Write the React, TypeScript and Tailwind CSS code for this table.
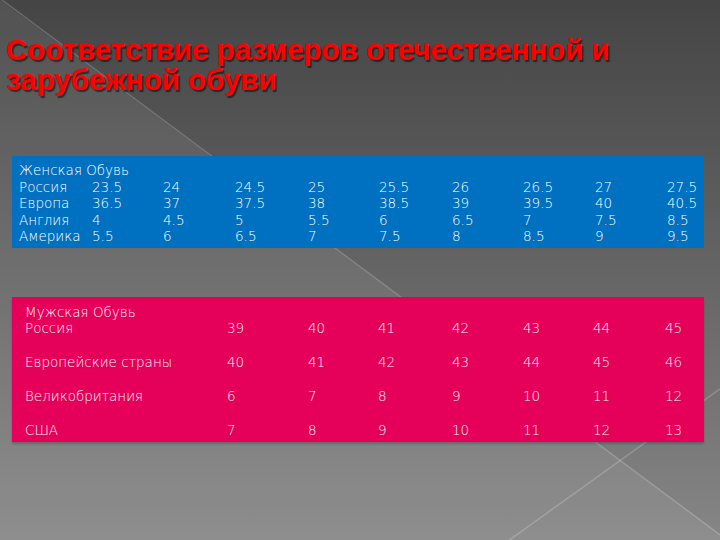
const WOMEN = [
  ['Россия', '23.5', '24', '24.5', '25', '25.5', '26', '26.5', '27', '27.5'],
  ['Европа', '36.5', '37', '37.5', '38', '38.5', '39', '39.5', '40', '40.5'],
  ['Англия', '4', '4.5', '5', '5.5', '6', '6.5', '7', '7.5', '8.5'],
  ['Америка', '5.5', '6', '6.5', '7', '7.5', '8', '8.5', '9', '9.5'],
];

const MEN = [
  ['Европейские страны', '40', '41', '42', '43', '44', '45', '46'],
  ['Великобритания', '6', '7', '8', '9', '10', '11', '12'],
  ['США', '7', '8', '9', '10', '11', '12', '13'],
];

const MEN_RUSSIA = ['39', '40', '41', '42', '43', '44', '45'];

function Backdrop() {
  return (
    <svg className="absolute inset-0" width="720" height="540" viewBox="0 0 720 540">
      <polygon points="0,0 727,540 0,540" fill="#ffffff" fillOpacity="0.07" />
      <line x1="2" y1="0" x2="727" y2="540" stroke="#ffffff" strokeOpacity="0.2" strokeWidth="1.5" />
      <line x1="724" y1="386" x2="508" y2="541" stroke="#ffffff" strokeOpacity="0.2" strokeWidth="1.5" />
    </svg>
  );
}

export default function App() {
  return (
    <div className="relative w-[720px] h-[540px] overflow-hidden bg-linear-to-b from-[#454545] to-[#868686] font-['DejaVu_Sans',sans-serif]">
      <Backdrop />

      <div className="relative flex flex-col">
        {/* Title */}
        <h1 className="pt-[35px] pl-[6px] text-[29.5px] leading-[30px] font-bold text-[#ff0000] font-['Liberation_Sans',Arial,sans-serif] [text-shadow:2px_2px_1px_rgba(0,0,0,0.5)]">
          Соответствие размеров отечественной и
          <br />
          зарубежной обуви
        </h1>

        {/* Women's sizes */}
        <div className="mt-[61px] ml-[12px] w-[692px] h-[92px] bg-[#0070c0] pt-[6px] pl-[7px] text-[13.5px] font-extralight leading-[16.5px] text-white">
          <div className="whitespace-nowrap">Женская Обувь</div>
          {WOMEN.map((row) => (
            <div
              key={row[0]}
              className="grid grid-cols-[73px_71px_72px_73px_71px_73px_71px_72px_72px_1fr] whitespace-nowrap"
            >
              {row.map((cell, i) => (
                <span key={i}>{cell}</span>
              ))}
            </div>
          ))}
        </div>

        {/* Men's sizes */}
        <div className="mt-[49px] ml-[12px] w-[692px] h-[145px] bg-[#e5005a] pt-[7px] pl-[13px] text-[13.5px] font-extralight leading-[16px] text-[#fff0f5] flex flex-col gap-[18px] shadow-[0_2px_2px_rgba(0,0,0,0.2)]">
          <div>
            <div className="whitespace-nowrap">Мужская Обувь</div>
            <div className="grid grid-cols-[202px_81px_70px_74px_71px_70px_72px_1fr] whitespace-nowrap">
              <span>Россия</span>
              {MEN_RUSSIA.map((v, i) => (
                <span key={i}>{v}</span>
              ))}
            </div>
          </div>
          {MEN.map((row) => (
            <div
              key={row[0]}
              className="grid grid-cols-[202px_81px_70px_74px_71px_70px_72px_1fr] whitespace-nowrap"
            >
              {row.map((cell, i) => (
                <span key={i}>{cell}</span>
              ))}
            </div>
          ))}
        </div>
      </div>
    </div>
  );
}
